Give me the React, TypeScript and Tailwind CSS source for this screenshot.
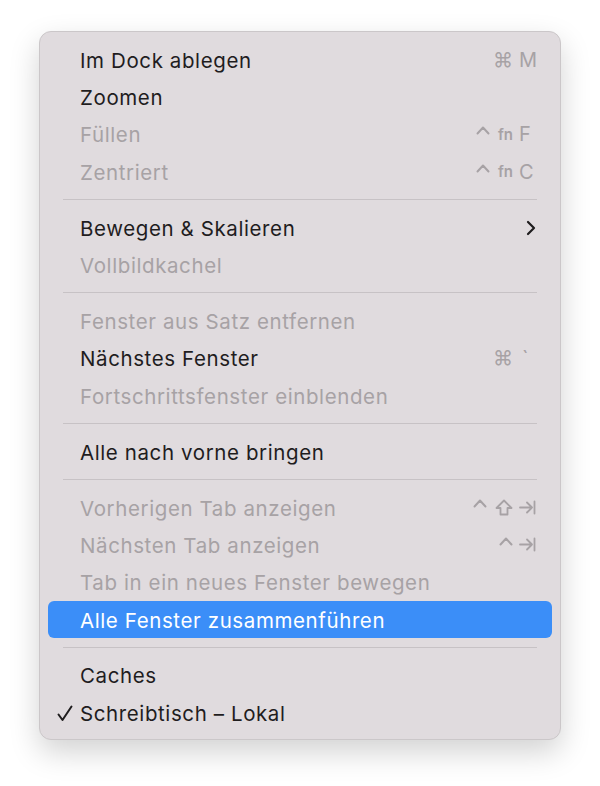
import React from "react";

type Item = {
  label: string;
  disabled?: boolean;
  active?: boolean;
  checked?: boolean;
  submenu?: boolean;
  mods?: React.ReactNode;
  keyGlyph?: React.ReactNode;
};

const Caret = () => (
  <svg width="14" height="10" viewBox="0 0 14 10" className="-mt-[8px]">
    <polyline points="1.5,8.5 7,2.5 12.5,8.5" fill="none" stroke="currentColor" strokeWidth="2" strokeLinecap="round" strokeLinejoin="round" />
  </svg>
);

const Shift = () => (
  <svg width="18" height="17" viewBox="0 0 18 17">
    <path d="M9 1.5 L16.5 9 H12.5 V15.5 H5.5 V9 H1.5 Z" fill="none" stroke="currentColor" strokeWidth="1.8" strokeLinejoin="round" />
  </svg>
);

const Tab = () => (
  <svg width="17" height="15" viewBox="0 0 17 15">
    <path d="M1 7.5 H13 M8 2.5 L13 7.5 L8 12.5 M15.5 1.5 V13.5" fill="none" stroke="currentColor" strokeWidth="1.8" strokeLinecap="round" strokeLinejoin="round" />
  </svg>
);

const Fn = () => <span className="text-[15px] font-semibold leading-none">fn</span>;

const groups: Item[][] = [
  [
    { label: "Im Dock ablegen", mods: <span>⌘</span>, keyGlyph: "M" },
    { label: "Zoomen" },
    { label: "Füllen", disabled: true, mods: <><Caret /><Fn /></>, keyGlyph: "F" },
    { label: "Zentriert", disabled: true, mods: <><Caret /><Fn /></>, keyGlyph: "C" },
  ],
  [
    { label: "Bewegen & Skalieren", submenu: true },
    { label: "Vollbildkachel", disabled: true },
  ],
  [
    { label: "Fenster aus Satz entfernen", disabled: true },
    { label: "Nächstes Fenster", mods: <span>⌘</span>, keyGlyph: <span className="pl-[3px]">`</span> },
    { label: "Fortschrittsfenster einblenden", disabled: true },
  ],
  [{ label: "Alle nach vorne bringen" }],
  [
    { label: "Vorherigen Tab anzeigen", disabled: true, mods: <><Caret /><Shift /></>, keyGlyph: <Tab /> },
    { label: "Nächsten Tab anzeigen", disabled: true, mods: <><Caret /></>, keyGlyph: <Tab /> },
    { label: "Tab in ein neues Fenster bewegen", disabled: true },
    { label: "Alle Fenster zusammenführen", active: true },
  ],
  [
    { label: "Caches" },
    { label: "Schreibtisch – Lokal", checked: true },
  ],
];

function Row({ item }: { item: Item }) {
  const text = item.active
    ? "text-white"
    : item.disabled
    ? "text-[#a7a2a5]"
    : "text-[#1f1d1e]";
  return (
    <div
      className={`relative flex h-[37.3px] items-center pl-[32px] pr-[15px] ${
        item.active ? "rounded-[6px] bg-[#3b8ef8]" : ""
      } ${text}`}
    >
      {item.checked && (
        <svg width="16" height="17" viewBox="0 0 16 17" className="absolute left-[9px] top-[11px]">
          <polyline points="1.5,9.5 5.5,15 14.5,1.5" fill="none" stroke="#1f1d1e" strokeWidth="2" strokeLinecap="round" strokeLinejoin="round" />
        </svg>
      )}
      <span className="flex-1 pt-[3px] text-[20.5px] leading-none tracking-[0.6px]">{item.label}</span>
      {item.keyGlyph && (
        <div className="flex items-center text-[#a7a2a5]">
          <div className="flex items-center gap-[8px] text-[20px] leading-none">{item.mods}</div>
          <div className="ml-[6px] flex w-[18px] items-center text-[20px] leading-none">{item.keyGlyph}</div>
        </div>
      )}
      {item.submenu && (
        <svg width="10" height="16" viewBox="0 0 10 16" className="mr-[1px]">
          <polyline points="2,2 8,8 2,14" fill="none" stroke="#1f1d1e" strokeWidth="2.2" strokeLinecap="round" strokeLinejoin="round" />
        </svg>
      )}
    </div>
  );
}

export default function App() {
  return (
    <div className="min-h-[786px] w-[600px] bg-white pl-[39px] pt-[31px] font-['Inter','Noto_Sans',sans-serif]">
      <div className="w-[522px] rounded-[12px] border border-[#cbc7c9] bg-[#e0dbde] px-[8px] pb-[8px] pt-[9px] shadow-[0_12px_30px_rgba(0,0,0,0.18)]">
        {groups.map((group, gi) => (
          <div key={gi}>
            {gi > 0 && (
              <div className="flex h-[18.7px] items-center px-[15px]">
                <div className="h-px w-full bg-[#c7c2c5]" />
              </div>
            )}
            {group.map((item) => (
              <Row key={item.label} item={item} />
            ))}
          </div>
        ))}
      </div>
    </div>
  );
}
